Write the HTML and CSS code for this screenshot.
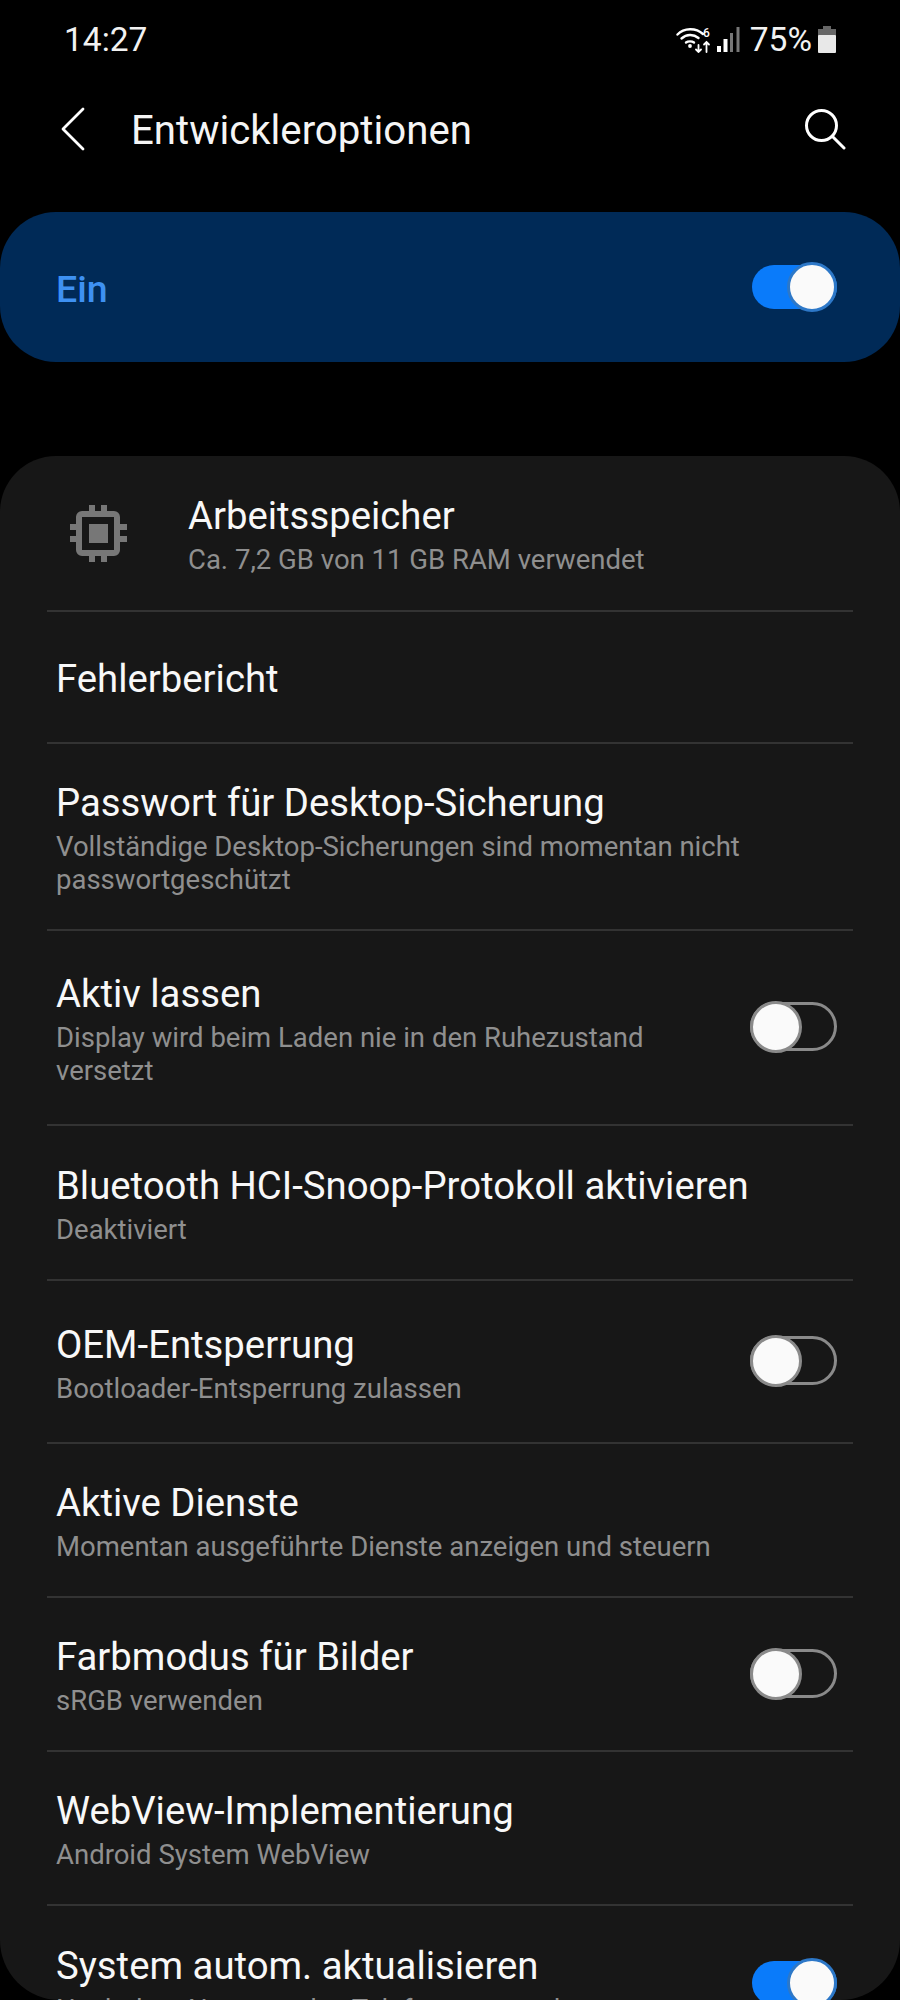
FILE: index.html
```html
<!DOCTYPE html>
<html lang="de">
<head>
    <meta charset="UTF-8">
    <meta name="viewport" content="width=device-width, initial-scale=1.0">
    <title>Entwickleroptionen</title>
    <link rel="stylesheet" href="styles.css">
</head>
<body>
    <div class="screen">
        <div class="status-bar">
            <span class="clock">14:27</span>
            <div class="status-icons">
                <svg class="wifi-icon" width="36" height="27" viewBox="0 0 36 27" fill="none" stroke="#fff" stroke-linecap="round">
                    <path d="M1.500 8.500C8 1.500 20 1.500 27 8" stroke-width="2.400"/>
                    <path d="M5.500 12.500C10.500 8 17.500 8 22.500 12" stroke-width="2.400"/>
                    <path d="M10 16.500C12 15 16 15 18 16.500" stroke-width="2.400"/>
                    <circle cx="14" cy="20" r="1.900" fill="#fff" stroke="none"/>
                    <path d="M22.500 19v7M20 23.500l2.500 2.500 2.500-2.500" stroke-width="1.800"/>
                    <path d="M30.500 26v-10M28 18.500l2.500-2.500 2.500 2.500" stroke-width="1.800"/>
                    <text x="27" y="11" class="wifi-six" fill="#fff" stroke="none">6</text>
                </svg>
                <svg class="signal-icon" width="23" height="26" viewBox="0 0 23 26">
                    <rect x="0" y="20" width="4" height="6" fill="#fff"/>
                    <rect x="6.500" y="13" width="4" height="13" fill="#fff"/>
                    <rect x="13" y="7" width="3" height="19" fill="#777"/>
                    <rect x="19.500" y="1" width="3" height="25" fill="#777"/>
                </svg>
                <span class="battery-text">75%</span>
                <svg class="battery-icon" width="18" height="27" viewBox="0 0 18 27">
                    <path d="M5 0h8v3h5v7H0V3h5z" fill="#666"/>
                    <rect y="9" width="18" height="18" rx="1" fill="#e8e8e8"/>
                </svg>
            </div>
        </div>

        <div class="app-bar">
            <svg class="back-icon" width="24" height="44" viewBox="0 0 24 44" fill="none" stroke="#fff" stroke-width="2.800" stroke-linecap="round" stroke-linejoin="round">
                <path d="M22 2 2 22l20 20"/>
            </svg>
            <h1>Entwickleroptionen</h1>
            <svg class="search-icon" width="42" height="42" viewBox="0 0 42 42" fill="none" stroke="#fff" stroke-width="3" stroke-linecap="round">
                <circle cx="17.500" cy="17.500" r="15"/>
                <path d="M28.500 28.500l11.500 11.500"/>
            </svg>
        </div>

        <div class="master-switch">
            <span>Ein</span>
            <div class="toggle on"><div class="knob"></div></div>
        </div>

        <div class="card">
            <div class="row row-memory">
                <svg class="chip-icon" width="57" height="57" viewBox="0 0 57 57" fill="#777">
                    <path fill-rule="evenodd" d="M12 6h32a6 6 0 0 1 6 6v33a6 6 0 0 1-6 6H12a6 6 0 0 1-6-6V12a6 6 0 0 1 6-6zM12 12v33h32V12z"/>
                    <rect x="19" y="19" width="19" height="19"/>
                    <rect x="19" y="0" width="6" height="7"/>
                    <rect x="31" y="0" width="6" height="7"/>
                    <rect x="19" y="50" width="6" height="7"/>
                    <rect x="31" y="50" width="6" height="7"/>
                    <rect x="0" y="19" width="7" height="6"/>
                    <rect x="0" y="31" width="7" height="6"/>
                    <rect x="50" y="19" width="7" height="6"/>
                    <rect x="50" y="31" width="7" height="6"/>
                </svg>
                <div class="row-text">
                    <div class="title">Arbeitsspeicher</div>
                    <div class="sub">Ca. 7,2 GB von 11 GB RAM verwendet</div>
                </div>
            </div>
            <div class="row row-bug">
                <div class="row-text">
                    <div class="title">Fehlerbericht</div>
                </div>
            </div>
            <div class="row row-password">
                <div class="row-text">
                    <div class="title">Passwort für Desktop-Sicherung</div>
                    <div class="sub">Vollständige Desktop-Sicherungen sind momentan nicht passwortgeschützt</div>
                </div>
            </div>
            <div class="row row-awake">
                <div class="row-text narrow">
                    <div class="title">Aktiv lassen</div>
                    <div class="sub">Display wird beim Laden nie in den Ruhezustand versetzt</div>
                </div>
                <div class="toggle"><div class="knob"></div></div>
            </div>
            <div class="row row-snoop">
                <div class="row-text">
                    <div class="title">Bluetooth HCI-Snoop-Protokoll aktivieren</div>
                    <div class="sub">Deaktiviert</div>
                </div>
            </div>
            <div class="row row-oem">
                <div class="row-text narrow">
                    <div class="title">OEM-Entsperrung</div>
                    <div class="sub">Bootloader-Entsperrung zulassen</div>
                </div>
                <div class="toggle"><div class="knob"></div></div>
            </div>
            <div class="row row-services">
                <div class="row-text">
                    <div class="title">Aktive Dienste</div>
                    <div class="sub">Momentan ausgeführte Dienste anzeigen und steuern</div>
                </div>
            </div>
            <div class="row row-color">
                <div class="row-text narrow">
                    <div class="title">Farbmodus für Bilder</div>
                    <div class="sub">sRGB verwenden</div>
                </div>
                <div class="toggle"><div class="knob"></div></div>
            </div>
            <div class="row row-webview">
                <div class="row-text">
                    <div class="title">WebView-Implementierung</div>
                    <div class="sub">Android System WebView</div>
                </div>
            </div>
            <div class="row row-update">
                <div class="row-text narrow">
                    <div class="title">System autom. aktualisieren</div>
                    <div class="sub">Nach dem Neustart des Telefons anwenden</div>
                </div>
                <div class="toggle on"><div class="knob"></div></div>
            </div>
        </div>
    </div>
</body>
</html>
```

FILE: styles.css
```css
html, body {
    margin: 0;
    padding: 0;
    background: #000;
}

body {
    font-family: Roboto, 'Noto Sans', sans-serif;
    color: #fff;
}

.screen {
    width: 900px;
    height: 2000px;
    overflow: hidden;
    background: #000;
    border-radius: 0 0 60px 60px;
}

.status-bar {
    height: 78px;
    padding: 0 64px 0 64px;
    display: flex;
    align-items: center;
    justify-content: space-between;
}

.clock {
    font-size: 33.500px;
    color: #f2f2f2;
}

.status-icons {
    display: flex;
    align-items: center;
    gap: 5px;
}

.wifi-six {
    font-size: 12px;
    font-weight: 500;
}

.battery-text {
    font-size: 33.500px;
    color: #f2f2f2;
    margin: 0 1px 0 5px;
}

.app-bar {
    height: 102px;
    padding: 0 54px 0 61px;
    display: flex;
    align-items: center;
}

.app-bar h1 {
    flex: 1;
    margin: 2px 0 0 46px;
    font-size: 40.200px;
    font-weight: 400;
    color: #f5f5f5;
}

.master-switch {
    margin-top: 32px;
    height: 150px;
    padding: 0 63px 0 56px;
    border-radius: 56px;
    background: #002a57;
    display: flex;
    align-items: center;
    justify-content: space-between;
}

.master-switch span {
    font-size: 37.500px;
    font-weight: 500;
    color: #3e91f2;
    margin-top: 4px;
}

.toggle {
    position: relative;
    flex: none;
    box-sizing: border-box;
    width: 87px;
    height: 49px;
    margin-top: -2px;
    border: 3px solid #8a8a8a;
    border-radius: 25px;
}

.toggle.on {
    border: none;
    background: #0a7bfa;
    width: 85px;
    height: 44px;
    margin-top: 0;
}

.knob {
    position: absolute;
    left: -3px;
    top: -4px;
    box-sizing: border-box;
    width: 52px;
    height: 52px;
    border: 3px solid #8a8a8a;
    border-radius: 50%;
    background: #fafafa;
}

.toggle.on .knob {
    left: auto;
    right: 0;
    top: -3px;
    width: 50px;
    height: 50px;
    border-color: #2d78c8;
}

.card {
    margin-top: 94px;
    padding: 0 47px;
    background: #171717;
    border-radius: 56px 56px 0 0;
    height: 1600px;
}

.row {
    box-sizing: border-box;
    display: flex;
    align-items: center;
    justify-content: space-between;
    padding: 0 16px 0 9px;
    border-bottom: 2px solid #333;
}

.row:last-child {
    border-bottom: none;
}

.row-text {
    flex: 1;
    min-width: 0;
    padding-top: 4px;
}

.row-text.narrow {
    max-width: 650px;
}

.title {
    font-size: 38.300px;
    line-height: 44px;
    color: #f8f8f8;
}

.sub {
    font-size: 27.500px;
    line-height: 33px;
    margin-top: 5px;
    color: #8f8f8f;
}

.row-memory { height: 156px; padding-left: 23px; justify-content: flex-start; }
.row-memory .row-text { margin-left: 61px; }
.chip-icon { flex: none; }
.row-bug { height: 132px; }
.row-password { height: 187px; }
.row-awake { height: 195px; }
.row-snoop { height: 155px; }
.row-oem { height: 163px; }
.row-services { height: 154px; }
.row-color { height: 154px; }
.row-webview { height: 154px; }
.row-update { height: 153px; }
```
